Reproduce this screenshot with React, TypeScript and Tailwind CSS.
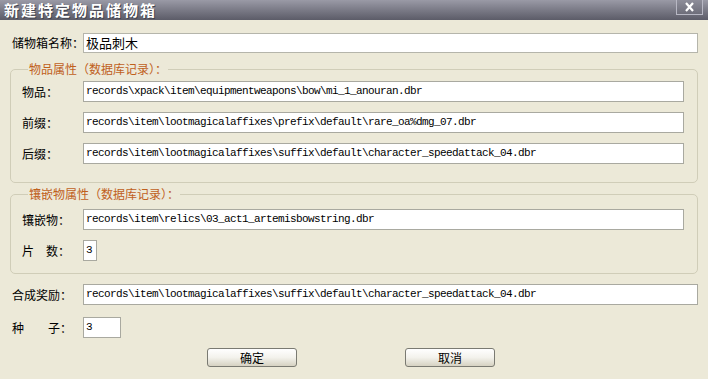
import React from "react";

const cjk = { fontFamily: '"Noto Sans CJK SC", "Noto Sans", sans-serif' };
const mono = { fontFamily: '"Liberation Mono", "Noto Sans CJK SC", monospace' };

function Field({ value, className }: { value: string; className: string }) {
  return (
    <div
      className={
        "h-[21px] bg-white border border-[#a9a9a0] flex items-center pl-[2px] text-[11px] tracking-[-0.6px] text-black whitespace-nowrap overflow-hidden " +
        className
      }
      style={mono}
    >
      {value}
    </div>
  );
}

function Row({ label, value, w }: { label: React.ReactNode; value: string; w: string }) {
  return (
    <div className="flex items-center h-[21px]">
      <div className="w-[61px] shrink-0 whitespace-nowrap text-[12px] text-black" style={cjk}>
        {label}
      </div>
      <Field value={value} className={w} />
    </div>
  );
}

export default function App() {
  const suffix = "records\\item\\lootmagicalaffixes\\suffix\\default\\character_speedattack_04.dbr";
  return (
    <div className="w-[708px] h-[379px] bg-[#ece9d8] overflow-hidden flex flex-col">
      <div className="h-[20px] shrink-0 flex items-center justify-between bg-gradient-to-b from-[#9a9aa6] to-[#5c5c68]">
        <div
          className="pl-[4px] text-[15px] font-bold text-white tracking-[2px] leading-[18px] whitespace-nowrap [text-shadow:1px_1px_0_#44444e]"
          style={cjk}
        >
          新建特定物品储物箱
        </div>
        <div className="mr-[5px] self-start w-[27px] h-[15px] border border-[#b8b8c4] border-t-0 bg-gradient-to-b from-[#8e8e9a] to-[#6e6e7a] flex items-center justify-center">
          <svg width="11" height="10" viewBox="0 0 11 10">
            <path d="M2 1 L9 9 M9 1 L2 9" stroke="white" strokeWidth="2.2" />
          </svg>
        </div>
      </div>

      <div className="flex flex-col px-[10px]">
        <div className="flex items-center h-[20px] mt-[13px]">
          <div className="w-[73px] shrink-0 whitespace-nowrap pl-[2px] text-[12px] text-black" style={cjk}>
            储物箱名称：
          </div>
          <div
            className="h-[20px] flex-1 bg-white border border-[#b5b5ab] flex items-center pl-[2px] text-[13px] text-black"
            style={cjk}
          >
            极品刺木
          </div>
        </div>

        <fieldset className="mt-[8px] border border-[#d0cdb8] rounded-[5px] pl-[11px] pr-[13px] pt-[4px] pb-[18px]">
          <legend className="ml-[6px] px-[1px] text-[12px] text-[#c0601c] leading-[16px]" style={cjk}>
            物品属性（数据库记录）：
          </legend>
          <div className="flex flex-col gap-[10px]">
            <Row label="物品：" value="records\xpack\item\equipmentweapons\bow\mi_1_anouran.dbr" w="flex-1" />
            <Row label="前缀：" value="records\item\lootmagicalaffixes\prefix\default\rare_oa%dmg_07.dbr" w="flex-1" />
            <Row label="后缀：" value={suffix} w="flex-1" />
          </div>
        </fieldset>

        <fieldset className="mt-[3px] border border-[#d0cdb8] rounded-[5px] pl-[11px] pr-[13px] pt-[7px] pb-[12px]">
          <legend className="ml-[6px] px-[1px] text-[12px] text-[#c0601c] leading-[16px]" style={cjk}>
            镶嵌物属性（数据库记录）：
          </legend>
          <div className="flex flex-col gap-[10px]">
            <Row label="镶嵌物：" value="records\item\relics\03_act1_artemisbowstring.dbr" w="flex-1" />
            <Row
              label={
                <span>
                  片<span className="inline-block w-[12px]" />数：
                </span>
              }
              value="3"
              w="w-[14px]"
            />
          </div>
        </fieldset>

        <div className="flex items-center h-[21px] mt-[10px]">
          <div className="w-[73px] shrink-0 whitespace-nowrap pl-[2px] text-[12px] text-black" style={cjk}>
            合成奖励：
          </div>
          <Field value={suffix} className="flex-1" />
        </div>

        <div className="flex items-center h-[21px] mt-[12px]">
          <div className="w-[73px] shrink-0 whitespace-nowrap pl-[2px] text-[12px] text-black" style={cjk}>
            种<span className="inline-block w-[24px]" />子：
          </div>
          <Field value="3" className="w-[38px]" />
        </div>

        <div className="flex mt-[10px] pl-[197px] gap-[108px]">
          {["确定", "取消"].map((t) => (
            <div
              key={t}
              className="w-[90px] h-[19px] rounded-[3px] border border-[#7a7a72] bg-gradient-to-b from-[#ffffff] via-[#f3f2ec] to-[#d6d2c2] flex items-center justify-center text-[12px] text-black"
              style={cjk}
            >
              {t}
            </div>
          ))}
        </div>
      </div>
    </div>
  );
}
